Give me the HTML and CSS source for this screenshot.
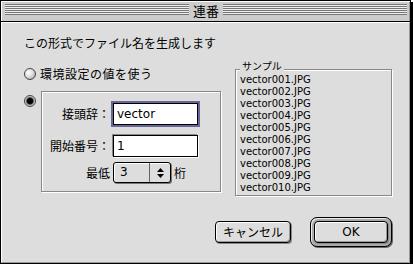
FILE: index.html
```html
<!DOCTYPE html>
<html lang="ja">
<head>
    <meta charset="UTF-8">
    <title>連番</title>
    <link rel="stylesheet" href="styles.css">
</head>
<body>
    <div class="window">
        <div class="titlebar">
            <span class="stripes"></span>
            <span class="title">連番</span>
            <span class="stripes"></span>
        </div>

        <div class="dialog">
            <p class="prompt">この形式でファイル名を生成します</p>

            <div class="main">
                <div class="options">
                    <div class="option">
                        <span class="radio"></span>
                        <span class="option-label">環境設定の値を使う</span>
                    </div>
                    <div class="option option-custom">
                        <span class="radio checked"></span>
                        <div class="group">
                            <div class="field">
                                <label class="field-label" for="prefix">接頭辞：</label>
                                <input class="textbox focused" id="prefix" type="text" value="vector">
                            </div>
                            <div class="field row-start">
                                <label class="field-label" for="startNo">開始番号：</label>
                                <input class="textbox" id="startNo" type="text" value="1">
                            </div>
                            <div class="field row-digits">
                                <span class="field-label">最低</span>
                                <span class="popup">
                                    <span class="popup-value">3</span>
                                    <span class="popup-arrows">
                                        <svg width="7" height="10" viewBox="0 0 7 10">
                                            <polygon points="3.5,0 7,4 0,4" fill="#000"/>
                                            <polygon points="0,6 7,6 3.5,10" fill="#000"/>
                                        </svg>
                                    </span>
                                </span>
                                <span class="unit">桁</span>
                            </div>
                        </div>
                    </div>
                </div>

                <div class="sample">
                    <span class="sample-title">サンプル</span>
                    <div>vector001.JPG</div>
                    <div>vector002.JPG</div>
                    <div>vector003.JPG</div>
                    <div>vector004.JPG</div>
                    <div>vector005.JPG</div>
                    <div>vector006.JPG</div>
                    <div>vector007.JPG</div>
                    <div>vector008.JPG</div>
                    <div>vector009.JPG</div>
                    <div>vector010.JPG</div>
                </div>
            </div>

            <div class="actions">
                <button class="btn">キャンセル</button>
                <span class="default-ring"><button class="btn">OK</button></span>
            </div>
        </div>
    </div>
</body>
</html>
```

FILE: styles.css
```css
body { margin: 0; background: #fff; font-family: "Noto Sans CJK JP", sans-serif; font-size: 12px; color: #000; }
.window { width: 411px; height: 264px; box-sizing: border-box; border: 1px solid #000; box-shadow: 2px 2px 0 #000; background: #ddd; display: flex; flex-direction: column; }

/* title bar */
.titlebar { height: 21px; box-sizing: border-box; display: flex; align-items: flex-start; padding: 3px 3px 0 4px; background: #ccc; border-bottom: 1px solid #000; box-shadow: inset 1px 1px 0 #fff, inset -1px 0 0 #999; }
.stripes { flex: 1; height: 11px; background: repeating-linear-gradient(to bottom, #777 0 1px, #eee 1px 2px); }
.title { padding: 0 4px; font-size: 13px; line-height: 14px; }

/* dialog body */
.dialog { flex: 1; border-left: 1px solid #fff; border-top: 1px solid #fff; border-right: 1px solid #999; border-bottom: 1px solid #999; padding: 13px 0 0 22px; }
.prompt { margin: 0; line-height: 14px; }
.main { display: flex; gap: 14px; margin-top: 10px; }
.options { width: 197px; padding-top: 8px; }
.option { display: flex; align-items: center; gap: 4px; line-height: 12px; }
.option-label { letter-spacing: 0.5px; }
.option-custom { align-items: flex-start; gap: 5px; margin-top: 11px; }
.option-custom .radio { margin-top: 4px; }

.radio { flex: none; width: 12px; height: 12px; box-sizing: border-box; border-radius: 50%; border: 1px solid #444; background: radial-gradient(circle at 35% 35%, #fff 0, #ddd 45%, #999 100%); }
.radio.checked { background: radial-gradient(circle, #000 0 2.5px, #222 3px, #999 4px, #ddd 5px); }

.group { width: 180px; height: 101px; box-sizing: border-box; border: 1px solid #888; box-shadow: inset 1px 1px 0 #fff, 1px 1px 0 #fff; padding-top: 11px; }
.field { display: flex; align-items: center; gap: 3px; line-height: 14px; }
.row-start { margin-top: 10px; }
.row-digits { margin-top: 5px; }
.field-label { flex: none; width: 68px; text-align: right; }

.textbox { width: 85px; height: 22px; box-sizing: border-box; margin: 0; padding: 0 3px; border: 1px solid #000; background: #fff; font: 12px "DejaVu Sans", sans-serif; color: #000; outline: none; box-shadow: -1px -1px 0 #888, 1px 1px 0 #fff; }
.textbox.focused { box-shadow: 0 0 0 2px #666699; }

.popup { display: flex; width: 58px; height: 21px; box-sizing: border-box; border: 1px solid #000; border-radius: 3px; background: #ddd; box-shadow: inset 1px 1px 0 #fff, 1px 1px 0 #777; }
.popup-value { flex: 1; padding-left: 6px; font: 12px/19px "DejaVu Sans", sans-serif; }
.popup-arrows { width: 20px; border-left: 1px solid #666; display: flex; align-items: center; justify-content: center; }

/* sample list */
.sample { position: relative; width: 157px; height: 127px; box-sizing: border-box; margin-top: 9px; padding: 4px 0 0 4px; border: 1px solid #888; box-shadow: inset 1px 1px 0 #fff, 1px 1px 0 #fff; font: 10px/12px "DejaVu Sans", sans-serif; }
.sample-title { position: absolute; top: -10px; left: 4px; padding: 0 2px; background: #ddd; font: 10px/12px "Noto Sans CJK JP", sans-serif; }

/* buttons */
.actions { display: flex; justify-content: flex-end; align-items: center; gap: 19px; width: 368px; margin-top: 21px; }
.btn { width: 76px; height: 22px; padding: 0; border: 1px solid #000; border-radius: 4px; background: #ddd; color: #000; font: 12px/18px "Noto Sans CJK JP", sans-serif; box-shadow: inset 1px 1px 0 #fff, inset -1px -1px 0 #999, 1px 1px 0 #888; }
.default-ring { display: flex; padding: 3px; border: 1px solid #000; border-radius: 7px; background: #aaa; box-shadow: inset 1px 1px 0 #eee, 1px 1px 0 #666; }
.default-ring .btn { width: 74px; font-family: "DejaVu Sans", sans-serif; }
```
